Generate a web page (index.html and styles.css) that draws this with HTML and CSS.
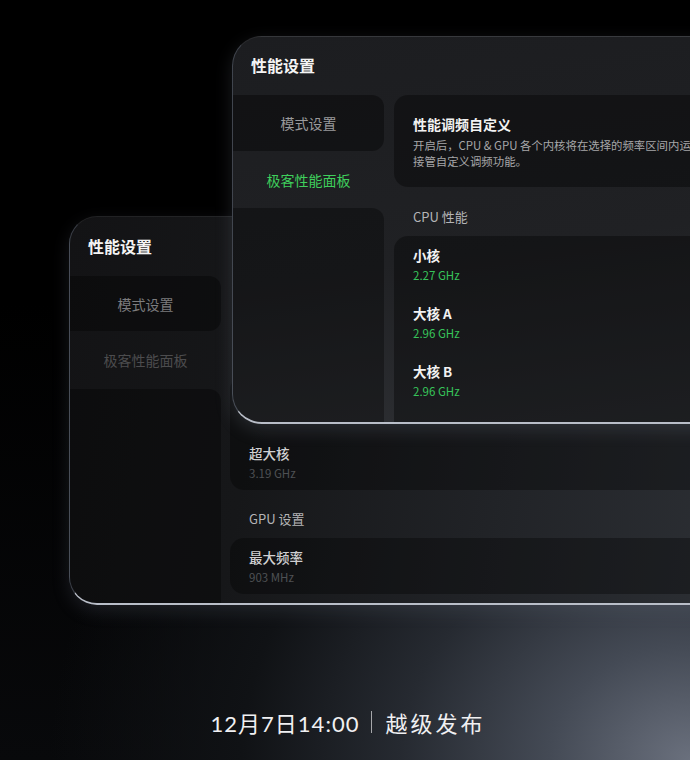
FILE: index.html
```html
<!DOCTYPE html>
<html lang="zh-CN">
<head>
<meta charset="utf-8">
<title>性能设置</title>
<link rel="stylesheet" href="styles.css">
</head>
<body>
<div class="stage">

  <div class="window back">
    <div class="win-title">性能设置</div>
    <div class="win-body">
      <div class="sidebar">
        <div class="side-item first">模式设置</div>
        <div class="side-item dim">极客性能面板</div>
        <div class="side-fill"></div>
      </div>
      <div class="content scrolled">
        <div class="card list">
          <div class="row"><div class="row-title">大核 B</div><div class="row-value">2.96 GHz</div></div>
          <div class="row"><div class="row-title">超大核</div><div class="row-value">3.19 GHz</div></div>
        </div>
        <div class="section-label">GPU 设置</div>
        <div class="card list">
          <div class="row"><div class="row-title">最大频率</div><div class="row-value">903 MHz</div></div>
        </div>
      </div>
    </div>
  </div>

  <div class="window front">
    <div class="win-title">性能设置</div>
    <div class="win-body">
      <div class="sidebar">
        <div class="side-item first">模式设置</div>
        <div class="side-item active">极客性能面板</div>
        <div class="side-fill"></div>
      </div>
      <div class="content">
        <div class="card intro">
          <div class="intro-title">性能调频自定义</div>
          <div class="intro-desc">
            <span class="desc-line">开启后，CPU &amp; GPU 各个内核将在选择的频率区间内运行，系统将</span>
            <span class="desc-line">接管自定义调频功能。</span>
          </div>
        </div>
        <div class="section-label">CPU 性能</div>
        <div class="card list">
          <div class="row"><div class="row-title">小核</div><div class="row-value">2.27 GHz</div></div>
          <div class="row"><div class="row-title">大核 A</div><div class="row-value">2.96 GHz</div></div>
          <div class="row"><div class="row-title">大核 B</div><div class="row-value">2.96 GHz</div></div>
          <div class="row"><div class="row-title">超大核</div><div class="row-value">3.19 GHz</div></div>
        </div>
      </div>
    </div>
  </div>

  <div class="caption">
    <span class="cap-date">12月7日14:00</span>
    <span class="cap-sep"></span>
    <span class="cap-text">越级发布</span>
  </div>
</div>
</body>
</html>
```

FILE: styles.css
```css
* { box-sizing: border-box; }

html, body {
  margin: 0;
  padding: 0;
  background: #000;
}

body {
  font-family: "Noto Sans CJK SC", "Noto Sans", "Liberation Sans", sans-serif;
  color: #fff;
}

.stage {
  position: relative;
  width: 690px;
  height: 760px;
  overflow: hidden;
  background:
    radial-gradient(ellipse 640px 520px at 100% 100%, #6a707d 0%, #444a55 22%, #262a31 45%, #101215 70%, rgba(0,0,0,0) 100%),
    linear-gradient(180deg, #000 0%, #000 40%, #08090b 100%);
  padding-top: 704px;
}

/* ---------- windows ---------- */
.window {
  position: absolute;
  display: flex;
  flex-direction: column;
  overflow: hidden;
  border: 1px solid rgba(255,255,255,0.06);
  border-bottom: 2px solid #b9bec8;
  border-right: none;
  border-left-color: rgba(130,140,160,0.35);
}

.window.back {
  left: 69px;
  top: 216px;
  width: 660px;
  height: 389px;
  border-radius: 28px 0 0 28px;
  background: linear-gradient(100deg, #131315 0%, #161719 30%, #212327 65%, #2c2f34 100%);
  box-shadow: 0 6px 18px rgba(120,130,150,0.18);
}

.window.front {
  left: 232px;
  top: 36px;
  width: 500px;
  height: 388px;
  border-radius: 30px 0 0 30px;
  background: linear-gradient(172deg, #1c1d20 0%, #202124 55%, #2e3034 100%);
  box-shadow: 0 6px 18px rgba(150,160,180,0.18);
}

.win-title {
  flex: 0 0 auto;
  font-size: 16px;
  font-weight: 700;
  line-height: 22px;
  padding-left: 18px;
  color: #f4f4f4;
}

.front .win-title { height: 58px; padding-top: 17px; }
.back .win-title { height: 59px; padding-top: 18px; }

.win-body {
  flex: 1 1 auto;
  display: flex;
  min-height: 0;
}

/* ---------- sidebar ---------- */
.sidebar {
  flex: 0 0 151px;
  display: flex;
  flex-direction: column;
}

.side-item {
  display: flex;
  align-items: center;
  justify-content: center;
  font-size: 14px;
  color: #9a9a9c;
}

.front .side-item.first { height: 56px; }
.front .side-item.active { height: 57px; }
.back .side-item.first { height: 55px; }
.back .side-item.dim { height: 58px; }

.side-item.first {
  background: rgba(0,0,0,0.38);
  border-radius: 0 12px 12px 0;
}

.back .side-item.first { color: #7c7c7e; background: rgba(0,0,0,0.35); }

.side-item.active { color: #3fcf5c; }

.side-item.dim { color: #4c4c4e; }

.side-fill {
  flex: 1 1 auto;
  background: rgba(0,0,0,0.33);
  border-radius: 0 12px 0 0;
}

/* ---------- content ---------- */
.content {
  flex: 1 1 auto;
  display: flex;
  flex-direction: column;
  margin-left: 10px;
  min-width: 0;
  overflow: hidden;
}

.back .content { margin-left: 9px; }

.content.scrolled {
  justify-content: flex-end;
  padding-bottom: 9px;
}

.card {
  background: rgba(0,0,0,0.36);
  border-radius: 14px 0 0 14px;
  padding-left: 19px;
  flex: 0 0 auto;
}

.back .card { background: rgba(0,0,0,0.32); }

.card.intro {
  height: 92px;
  padding-top: 21px;
}

.intro-title {
  font-size: 14px;
  font-weight: 700;
  line-height: 16px;
  color: #f2f2f2;
  margin-bottom: 5px;
}

.intro-desc {
  font-size: 11.4px;
  line-height: 16px;
  color: #a6a6a8;
}

.desc-line {
  display: block;
  white-space: nowrap;
}

.section-label {
  flex: 0 0 auto;
  font-size: 13px;
  line-height: 18px;
  color: #b4b4b6;
  padding-left: 19px;
}

.front .section-label { height: 49px; padding-top: 21px; }
.back .section-label { height: 48px; padding-top: 20px; }

.card.list { padding-top: 10px; }

.front .row { height: 58px; }

.back .card.list { padding-top: 10px; padding-bottom: 9px; }
.back .row + .row { margin-top: 21px; }

.row-title {
  font-size: 13.5px;
  font-weight: 700;
  line-height: 18px;
  color: #f2f2f2;
  margin-bottom: 3px;
}

.row-value {
  font-size: 11.5px;
  line-height: 16px;
  color: #37c45a;
}

.back .row-title { color: #cfcfd1; font-weight: 500; }
.back .row-value { color: #4e5054; }

/* ---------- caption ---------- */
.caption {
  display: flex;
  align-items: center;
  justify-content: center;
  height: 36px;
  padding-left: 6px;
  color: #f0f0f2;
}

.cap-date {
  font-family: "Lato", "Noto Sans CJK SC", sans-serif;
  font-size: 22px;
  font-weight: 400;
  letter-spacing: 1px;
}

.cap-sep {
  width: 1px;
  height: 22px;
  background: rgba(255,255,255,0.6);
  margin: 0 13px 0 12px;
}

.cap-text {
  font-size: 22px;
  font-weight: 400;
  letter-spacing: 3px;
}
```
